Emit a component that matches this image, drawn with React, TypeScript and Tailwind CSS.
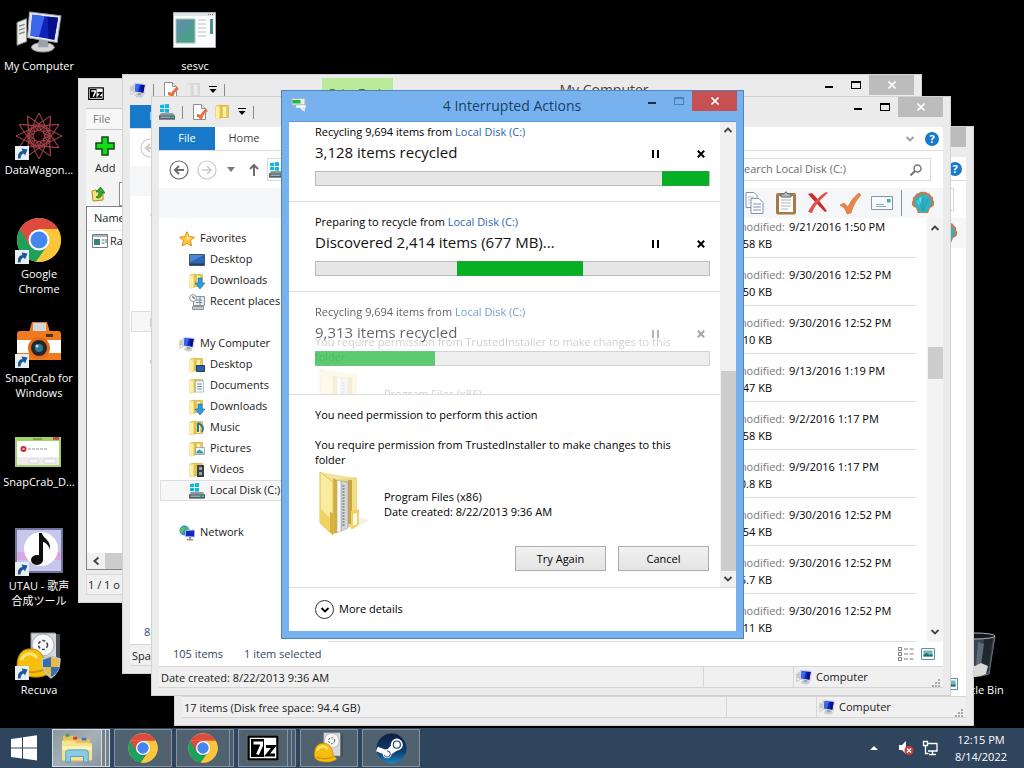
import type { ReactNode } from "react";

/* ---------- icons ---------- */

function ComputerIcon({ className }: { className: string }) {
  return (
    <svg viewBox="0 0 48 44" className={className} aria-hidden="true">
      <path d="M1 12l10-4v24l-10 4z" fill="#ecece8" stroke="#8d8d88" />
      <path d="M3 16l6-2M3 20l6-2M3 24l6-2" stroke="#888" strokeWidth="1.500" />
      <ellipse cx="28" cy="38" rx="12" ry="5" fill="#d5d7d9" stroke="#8f9294" />
      <path d="M24 29h9l1 9H23z" fill="#9ea2a6" />
      <path d="M14 1l33 4-4 28-31-5z" fill="#e2e6ea" stroke="#9ba1a8" />
      <path d="M17 4l27 3-4 23-25-4z" fill="#1224b8" />
      <path d="M17 4l13 1.500-6 21.500-9-1z" fill="#3b67ee" />
      <path d="M33 6l11 1-4 23-6-1z" fill="#07108a" />
    </svg>
  );
}

function DriveIcon({ className }: { className: string }) {
  return (
    <svg viewBox="0 0 16 16" className={className} aria-hidden="true">
      <path d="M1 1l4-.6V4H1zM5.800.3L10 0v4H5.800zM1 5h4v3.300L1 8zM5.800 5H10v3.800L5.800 8.400z" fill="#12b6e6" />
      <path d="M2 9h12l2 3v3.500H0V12z" fill="#8e989e" />
      <path d="M0 11.500h16v4H0z" fill="#4f6069" />
      <path d="M1.500 12.500h10v1.500h-10z" fill="#9ba9b1" />
      <path d="M12.500 12.500h2.500v1.500h-2.500z" fill="#25d8a0" />
    </svg>
  );
}

function PageCheckIcon({ className }: { className: string }) {
  return (
    <svg viewBox="0 0 16 16" className={className} aria-hidden="true">
      <path d="M1.500.5h8l4 4v11h-12z" fill="#fff" stroke="#8c8f92" />
      <path d="M9.500.5v4h4" fill="#e8ebee" stroke="#8c8f92" />
      <path d="M5 11.500q3 0 4 2.500 1-5 6-8" fill="none" stroke="#e4754a" strokeWidth="3" />
    </svg>
  );
}

type Overlay = "none" | "down" | "screen" | "doc" | "note" | "picture" | "film";

function FolderIcon({ className, overlay = "none" }: { className: string; overlay?: Overlay }) {
  return (
    <svg viewBox="0 0 16 16" className={className} aria-hidden="true">
      <path d="M1 2l5-1v13l-5 1z" fill="#f5df7d" stroke="#c9a63b" strokeWidth=".6" />
      <path d="M6 1.500h7.500v12H6z" fill="#ecca58" stroke="#c9a63b" strokeWidth=".6" />
      <path d="M8 3h3v10H8z" fill="#fff1a9" />
      <path d="M1 2l3 2v11.500L1 14.500z" fill="#fff0a0" />
      {overlay === "down" && <path d="M9 5h4v5h3l-5 6-5-6h3z" fill="#2c9bdc" stroke="#1470ad" strokeWidth=".6" />}
      {overlay === "screen" && <path d="M7.500 8.500h8v6h-8z" fill="#2b62ae" stroke="#243a5c" />}
      {overlay === "doc" && (
        <>
          <path d="M6.500 3h8v11h-8z" fill="#fff" stroke="#9fb0c4" strokeWidth=".8" />
          <path d="M8 6h5M8 8.500h5M8 11h5" stroke="#5f86c0" />
        </>
      )}
      {overlay === "note" && <path d="M9 3v9M9 3c5 2 6 5 4 9" fill="none" stroke="#27739a" strokeWidth="2" />}
      {overlay === "picture" && (
        <>
          <path d="M6.500 6.500h9v7h-9z" fill="#e9f4fb" stroke="#8fa3b3" strokeWidth=".8" />
          <path d="M7.500 12.500v-2l3-2 4 3v1z" fill="#3e9aa0" />
        </>
      )}
      {overlay === "film" && (
        <>
          <path d="M8 3h7v12H8z" fill="#3b3f45" />
          <path d="M10 5h3v3h-3zM10 10h3v3h-3z" fill="#8fa7b8" />
        </>
      )}
    </svg>
  );
}

function StarIcon({ className }: { className: string }) {
  return (
    <svg viewBox="0 0 16 16" className={className} aria-hidden="true">
      <path d="M8 .8l2.200 4.800 5.200.6-3.900 3.500 1.100 5.200L8 12.300l-4.600 2.600 1.100-5.200L.6 6.200l5.200-.6z" fill="#ffc83c" stroke="#e08a1c" />
      <path d="M8 3l1.200 3.500L13 7 8 9z" fill="#fff0a6" />
    </svg>
  );
}

function DesktopIcon({ className }: { className: string }) {
  return (
    <svg viewBox="0 0 16 16" className={className} aria-hidden="true">
      <path d="M.5 2.500h15v11H.5z" fill="#2e65b6" stroke="#47566b" />
      <path d="M1 3h14L1 10z" fill="#4d86d4" />
      <path d="M1 11.500h14V13H1z" fill="#203d6b" />
    </svg>
  );
}

function RecentIcon({ className }: { className: string }) {
  return (
    <svg viewBox="0 0 16 16" className={className} aria-hidden="true">
      <path d="M4.500 2.500h11v9h-11z" fill="#e7ebef" stroke="#8b949c" />
      <path d="M3.500 12.500h11v3h-11z" fill="#c4c9ce" stroke="#8b949c" />
      <path d="M7 6h6M7 8.500h6M11 3v8" stroke="#7f8b95" />
      <circle cx="4" cy="4" r="3.400" fill="#fff" stroke="#8b949c" />
      <path d="M4 2v2h2" fill="none" stroke="#555" />
    </svg>
  );
}

function NetworkIcon({ className }: { className: string }) {
  return (
    <svg viewBox="0 0 16 16" className={className} aria-hidden="true">
      <circle cx="5.500" cy="5.500" r="5" fill="#2f8fc8" />
      <path d="M2 3c2-2 5-1 4 1S3 6 4 9C1 8 0 5 2 3zM7 1c3 1 4 4 3 6-2 0-3-3-3-6z" fill="#5cc36d" />
      <path d="M6.500 5.500l9-.5v7l-9-.5z" fill="#1427c0" stroke="#aeb9c8" />
      <path d="M10 12h2v2h2v1.500H8V14h2z" fill="#8d97a4" />
    </svg>
  );
}

function ChromeIcon({ className }: { className: string }) {
  return (
    <svg viewBox="0 0 48 48" className={className} aria-hidden="true">
      <circle cx="24" cy="24" r="22" fill="#fbc63a" />
      <path d="M5 13a22 22 0 0 0 16 32.800L33 29l-9-5z" fill="#1da05b" />
      <path d="M24 13h19a22 22 0 0 1-22 32.800L33 29z" fill="#fbc63a" />
      <path d="M5 13A22 22 0 0 1 43 13H24z" fill="#dd4b3e" />
      <path d="M5 13l9.500 16.500L24 13z" fill="#dd4b3e" />
      <circle cx="24" cy="24" r="10.500" fill="#fff" />
      <circle cx="24" cy="24" r="8.500" fill="#4586ee" />
    </svg>
  );
}

function WebIcon({ className }: { className: string }) {
  const angles = [0, 30, 60, 90, 120, 150, 180, 210, 240, 270, 300, 330];
  return (
    <svg viewBox="0 0 48 48" className={className} aria-hidden="true">
      {angles.map((a) => (
        <g key={a} transform={"rotate(" + a + " 24 24)"} fill="none" stroke="#a8404a">
          <path d="M24 1l6.500 13L24 19l-6.500-5z" strokeWidth=".8" />
          <path d="M24 1l11 23M24 1L13 24" strokeWidth=".6" />
          <circle cx="24" cy="15" r="3.500" strokeWidth=".8" />
        </g>
      ))}
      <circle cx="24" cy="24" r="4" fill="#160203" />
    </svg>
  );
}

function CameraIcon({ className }: { className: string }) {
  return (
    <svg viewBox="0 0 48 48" className={className} aria-hidden="true">
      <path d="M14 12l3-10h15l3 10z" fill="#f07a1f" />
      <path d="M18 3h13v9H18z" fill="#cfd8de" />
      <path d="M2 14q0-3 3-3h38q3 0 3 3v26H2z" fill="#f07a1f" />
      <path d="M2 20h44v13H2z" fill="#fff" />
      <path d="M31 14h7v3h-7z" fill="#43331f" />
      <circle cx="24" cy="28" r="11" fill="#e86a17" />
      <circle cx="24" cy="28" r="8" fill="#20282e" />
      <circle cx="24" cy="28" r="4" fill="#2d7a94" />
      <circle cx="22" cy="26" r="1.500" fill="#b7e8f2" />
    </svg>
  );
}

function DialogShotIcon({ className }: { className: string }) {
  return (
    <svg viewBox="0 0 48 48" className={className} aria-hidden="true">
      <path d="M0 13h46v30H0z" fill="#a5d16a" />
      <path d="M2 17h42v24H2z" fill="#fff" />
      <path d="M38 13h6v3h-6z" fill="#c94f4f" />
      <path d="M18 15h9" stroke="#577637" />
      <path d="M2 33h42v8H2z" fill="#ececec" />
      <path d="M14 35h9v4h-9zM29 35h12v4H29z" fill="#f8f8f8" stroke="#cfcfcf" strokeWidth=".7" />
      <circle cx="8.500" cy="25" r="3" fill="#c62f3a" />
      <path d="M13 25h20" stroke="#999" strokeDasharray="3 1" />
      <path d="M7.500 24l2 2m0-2l-2 2" stroke="#fff" strokeWidth=".7" />
    </svg>
  );
}

function MusicNoteIcon({ className }: { className: string }) {
  return (
    <svg viewBox="0 0 48 48" className={className} aria-hidden="true">
      <path d="M1 1h46v43H1z" fill="#c9c6ee" stroke="#73759a" strokeWidth="2" />
      <path d="M2 24h44v8H2z" fill="#d9a6dd" />
      <circle cx="26" cy="21" r="17" fill="#fff" />
      <ellipse cx="22" cy="32" rx="6" ry="5" fill="#0d0d0d" />
      <path d="M24 5h3c1 6 9 6 8 17-1-5-5-8-7-8v18h-4z" fill="#0d0d0d" />
    </svg>
  );
}

function RecuvaIcon({ className, shield = false }: { className: string; shield?: boolean }) {
  return (
    <svg viewBox="0 0 48 48" className={className} aria-hidden="true">
      <path d="M16 1h24l3 3v32H16z" fill="#d6d9dc" stroke="#888" />
      <path d="M41 2h4v35h-4z" fill="#4a4e52" />
      <circle cx="28" cy="13" r="11" fill="#f6f7f8" stroke="#a8acb0" />
      <circle cx="28" cy="13" r="4.500" fill="none" stroke="#444" strokeWidth="1.500" strokeDasharray="3 2" />
      <path d="M2 34c0-13 7-18 14-17 9 0 14 7 14 18l6 5q-7 6-18 5Q1 44 2 34z" fill="#f6bf0f" stroke="#b98200" />
      <path d="M6 28c4-8 12-8 16-2" fill="none" stroke="#ffe875" strokeWidth="3" />
      <path d="M5 38c9 3 18 3 26-1" fill="none" stroke="#d29500" strokeWidth="2" />
      {shield && (
        <>
          <path d="M27 27l9-3 9 3c0 10-3 15-9 19-6-4-9-9-9-19z" fill="#e9ba3c" stroke="#b9c7d4" strokeWidth="1.500" />
          <path d="M28 28l8-3v10h-8zM36 35h8c-1 5-4 8-8 10z" fill="#356eb5" />
        </>
      )}
    </svg>
  );
}

function BinIcon({ className }: { className: string }) {
  return (
    <svg viewBox="0 0 48 48" className={className} aria-hidden="true">
      <path d="M4 4h40l-6 38q-14 5-28 0z" fill="#3b4550" stroke="#69727b" />
      <path d="M33 6h9l-5 34-8 3z" fill="#20262d" />
      <path d="M27 10l6 2-3 20-5 2z" fill="#5d6b79" />
      <ellipse cx="24" cy="4" rx="20" ry="3" fill="#14181c" stroke="#aeb6bd" />
      <path d="M9 33l7-4 8 5 6-3 7 3-2 8q-12 6-25 1z" fill="#d7d8d8" />
    </svg>
  );
}

function SesvcIcon({ className }: { className: string }) {
  return (
    <svg viewBox="0 0 48 48" className={className} aria-hidden="true">
      <path d="M2.500 4.500h42v35h-42z" fill="#fbfcfc" stroke="#a9b0b3" />
      <path d="M3 5h41v3H3z" fill="#dfe4e6" />
      <path d="M5 11h19v24H5z" fill="#4c9f8d" stroke="#a7c8c0" />
      <path d="M6 12h17L6 32z" fill="#5a93a3" />
      <path d="M27 12h8M27 16h8M27 20h8M27 24h8M27 28h8" stroke="#b9c0c4" />
      <path d="M39 11h3v15h-3z" fill="#4c8f90" />
      <path d="M37 6.500h6" stroke="#667" strokeDasharray="1 1" />
    </svg>
  );
}

function FilesFolderIcon({ className }: { className: string }) {
  return (
    <svg viewBox="0 0 64 64" className={className} aria-hidden="true">
      <path d="M38 44l17 4-14 8z" fill="#000" opacity=".06" />
      <path d="M5 0l37 6v12H10z" fill="#f3e49a" />
      <path d="M24 7l18-2v42l-4 8H24z" fill="#efd980" />
      <path d="M33 8h4v44h-4z" fill="#c9a548" />
      <path d="M37 8l5-2v32h-5z" fill="#f2dd84" />
      <path d="M26 9l7 1v46l-7 3z" fill="#d4d6da" stroke="#9c9a90" strokeWidth=".6" />
      <path d="M28.500 13v42" stroke="#8d959e" strokeWidth="2" strokeDasharray="2 1" />
      <path d="M22 8l4 1v50l-4 2z" fill="#fafafa" stroke="#a8a48c" strokeWidth=".6" />
      <path d="M18 6l4 2v53l-5 1z" fill="#d3ac45" />
      <path d="M5 0l13 10v53L5 51z" fill="#faeb9f" stroke="#dcc25c" />
      <path d="M5 36l12 12v15L5 51z" fill="#f0d260" />
      <path d="M15 40l3 1v21l-3-2z" fill="#d9b03a" />
      <path d="M36 39l8-2v15l-6 5h-2z" fill="#f0d263" />
      <path d="M38 42l4-1v11l-4 2z" fill="#fffbe8" />
    </svg>
  );
}

function ExplorerIcon({ className }: { className: string }) {
  return (
    <svg viewBox="0 0 36 32" className={className} aria-hidden="true">
      <path d="M3 3h12l2 3h15v24H3z" fill="#e5c162" />
      <path d="M6 1h4v3H6z" fill="#4a9b4a" />
      <path d="M14 4h4v3h-4z" fill="#d23b2e" />
      <path d="M23 5h5v3h-5z" fill="#3d79bd" />
      <path d="M2 8h13l3 3h16v18H2z" fill="#f7e28c" />
      <path d="M2 14h32v4H2z" fill="#fff2b8" />
      <path d="M6 31V21q0-3 3-3h18q3 0 3 3v10h-5v-6H11v6z" fill="#8acbe8" stroke="#4a9dc4" />
    </svg>
  );
}

function SteamIcon({ className }: { className: string }) {
  return (
    <svg viewBox="0 0 32 32" className={className} aria-hidden="true">
      <defs>
        <linearGradient id="steam" x1="0" y1="0" x2="0" y2="1">
          <stop offset="0" stopColor="#101d42" />
          <stop offset=".6" stopColor="#0f3d70" />
          <stop offset="1" stopColor="#1a86bc" />
        </linearGradient>
      </defs>
      <circle cx="16" cy="16" r="15.500" fill="url(#steam)" />
      <path d="M1 16.500l10 4" fill="none" stroke="#fff" strokeWidth="5" />
      <path d="M11 25l11-7-5-7-8 9z" fill="#fff" />
      <circle cx="21.500" cy="12" r="6.200" fill="#fff" />
      <circle cx="21.500" cy="12" r="4.200" fill="#17335d" />
      <circle cx="21.500" cy="12" r="3.100" fill="#fff" />
      <circle cx="11.500" cy="21.500" r="4.600" fill="#fff" />
      <path d="M8.500 22.500a3.200 3.200 0 1 0 3-4" fill="none" stroke="#17416f" />
    </svg>
  );
}

function SevenZipIcon({ className }: { className: string }) {
  return (
    <svg viewBox="0 0 32 26" className={className} aria-hidden="true">
      <path d="M0 0h32v26H0z" fill="#fff" />
      <path d="M1.500 1.500h29v23h-29z" fill="#fff" stroke="#000" strokeWidth="2.500" />
      <path d="M4 4h13v18H4z" fill="#000" />
      <path d="M6.500 8h8v2.500l-4 9" fill="none" stroke="#fff" strokeWidth="3" />
      <path d="M19 11.500h8L20 20h8" fill="none" stroke="#000" strokeWidth="2.800" />
    </svg>
  );
}

function ShellIcon({ className }: { className: string }) {
  return (
    <svg viewBox="0 0 24 24" className={className} aria-hidden="true">
      <path d="M12 1q3-1 4 1 3 0 4 3 3 1 2 4 2 2 1 5-1 2-4 3l-2 5H7l-2-5q-3-1-4-3-1-3 1-5-1-3 2-4 1-3 4-3 1-2 4-1z" fill="#bf7d53" />
      <path d="M12 3.500c6 0 8.500 5 8.500 8.500 0 3-2 5-4 6v3h-9v-3c-2-1-4-3-4-6 0-3.500 2.500-8.500 8.500-8.500z" fill="#2fb4c6" />
      <path d="M6 12q1-5 5-6l-2 8z" fill="#6ddbe4" />
      <path d="M12 20L7 8M12 20V6M12 20l5-12" stroke="#1f95aa" strokeWidth=".7" />
    </svg>
  );
}

function ViewLargeIcon({ className }: { className: string }) {
  return (
    <svg viewBox="0 0 16 16" className={className} aria-hidden="true">
      <path d="M1.500 2.500h13v11h-13z" fill="#fff" stroke="#5b93a8" />
      <path d="M3.500 4.500h9v6h-9z" fill="#6db7c8" />
      <path d="M3.500 10.500V9l3-2 3 2 3-1v2.500z" fill="#2a6b5a" />
    </svg>
  );
}

function ViewListIcon({ className }: { className: string }) {
  return (
    <svg viewBox="0 0 16 14" className={className} aria-hidden="true">
      <path d="M.5.5h3v3h-3zM.5 5.500h3v3h-3zM.5 10.500h3v3h-3z" fill="#fff" stroke="#7a7a7a" />
      <path d="M6 2h4M11.500 2h4M6 7h4M11.500 7h4M6 12h4M11.500 12h4" stroke="#7a7a7a" />
    </svg>
  );
}

function Caret({ className }: { className: string }) {
  return (
    <svg viewBox="0 0 8 8" className={className} aria-hidden="true">
      <path d="M0 .5h8" stroke="currentColor" />
      <path d="M.5 3h7L4 7z" fill="currentColor" />
    </svg>
  );
}

function Chevron({ up = false, className }: { up?: boolean; className: string }) {
  return (
    <svg viewBox="0 0 10 8" className={className} aria-hidden="true">
      <path d={up ? "M1.500 6L5 2.500 8.500 6" : "M1.500 2L5 5.500 8.500 2"} fill="none" stroke="currentColor" strokeWidth="1.800" />
    </svg>
  );
}

function ShortcutBadge() {
  return (
    <svg viewBox="0 0 14 14" className="absolute bottom-0 left-0 size-[14px]" aria-hidden="true">
      <path d="M0 0h14v14H0z" fill="#e6edf3" />
      <path d="M3 12.500C2.500 8 4 5.500 7.500 5L6.500 2.500l6 1-2.500 6-1-2C7 8 5.500 9.500 5.500 12.500z" fill="#1c5795" />
    </svg>
  );
}

/* ---------- desktop ---------- */

function DesktopItem({ label, icon, shortcut = false }: { label: string; icon: ReactNode; shortcut?: boolean }) {
  return (
    <button className="flex h-[104px] w-[78px] flex-col items-center pt-2 text-center leading-[15px] text-white">
      <span className="relative mb-[2px] flex size-12 items-center justify-center">
        {icon}
        {shortcut && <ShortcutBadge />}
      </span>
      <span className="whitespace-pre-line">{label}</span>
    </button>
  );
}

/* ---------- explorer window ---------- */

type NavRow = { label: string; icon: ReactNode; child?: boolean; gapAfter?: boolean };

const I = "size-4 shrink-0";

const favorites: NavRow[] = [
  { label: "Favorites", icon: <StarIcon className={I} /> },
  { label: "Desktop", icon: <DesktopIcon className={I} />, child: true },
  { label: "Downloads", icon: <FolderIcon className={I} overlay="down" />, child: true },
  { label: "Recent places", icon: <RecentIcon className={I} />, child: true, gapAfter: true },
];

const computerCollapsed: NavRow[] = [
  { label: "My Computer", icon: <ComputerIcon className={I} />, gapAfter: true },
];

const computerExpanded: NavRow[] = [
  { label: "My Computer", icon: <ComputerIcon className={I} /> },
  { label: "Desktop", icon: <FolderIcon className={I} overlay="screen" />, child: true },
  { label: "Documents", icon: <FolderIcon className={I} overlay="doc" />, child: true },
  { label: "Downloads", icon: <FolderIcon className={I} overlay="down" />, child: true },
  { label: "Music", icon: <FolderIcon className={I} overlay="note" />, child: true },
  { label: "Pictures", icon: <FolderIcon className={I} overlay="picture" />, child: true },
  { label: "Videos", icon: <FolderIcon className={I} overlay="film" />, child: true },
  { label: "Local Disk (C:)", icon: <DriveIcon className={I} />, child: true, gapAfter: true },
];

const network: NavRow[] = [{ label: "Network", icon: <NetworkIcon className={I} /> }];

const files = [
  { date: "9/21/2016 1:50 PM", size: "58 KB" },
  { date: "9/30/2016 12:52 PM", size: "50 KB" },
  { date: "9/30/2016 12:52 PM", size: "10 KB" },
  { date: "9/13/2016 1:19 PM", size: "47 KB" },
  { date: "9/2/2016 1:17 PM", size: "58 KB" },
  { date: "9/9/2016 1:17 PM", size: "10.8 KB" },
  { date: "9/30/2016 12:52 PM", size: "54 KB" },
  { date: "9/30/2016 12:52 PM", size: "15.7 KB" },
  { date: "9/30/2016 12:52 PM", size: "11 KB" },
];

function WindowButtons() {
  return (
    <div className="flex h-5 shrink-0">
      <button aria-label="Minimize" className="flex w-[27px] items-center justify-center pt-1">
        <span className="h-[2px] w-2 bg-black" />
      </button>
      <button aria-label="Maximize" className="flex w-[27px] items-center justify-center">
        <span className="h-2 w-[10px] border border-t-2 border-black" />
      </button>
      <button aria-label="Close" className="flex w-[45px] items-center justify-center bg-[#bcbcbc]">
        <svg viewBox="0 0 8 8" className="size-2" aria-hidden="true">
          <path d="M.5.5l7 7m0-7l-7 7" stroke="#fff" strokeWidth="1.600" />
        </svg>
      </button>
    </div>
  );
}

type ExplorerProps = {
  place: string;
  name: string;
  title?: string;
  contextTab?: string;
  icon: ReactNode;
  canGoBack?: boolean;
  nav: NavRow[];
  selected: string;
  counts: string[];
  details: string;
  showFiles?: boolean;
};

function Explorer(p: ExplorerProps) {
  return (
    <section
      aria-label={p.name}
      className={"absolute flex h-[600px] w-[800px] flex-col border border-[#d2d2d2] bg-[#ebebeb] px-[7px] pb-[7px] " + p.place}
    >
      <header className="flex h-[30px] shrink-0 items-start">
        <div className="flex h-full w-[192px] shrink-0 items-center gap-[7px]">
          {p.icon}
          <span className="h-[13px] w-px bg-[#8a8a8a]" />
          <button aria-label="Properties" className="pl-[2px]"><PageCheckIcon className="size-4" /></button>
          <button aria-label="New folder" className={p.title ? "opacity-40 grayscale" : ""}><FolderIcon className="size-4" /></button>
          <button aria-label="Customize toolbar"><Caret className="size-2" /></button>
          <span className="h-[13px] w-px bg-[#8a8a8a]" />
        </div>
        {p.contextTab && (
          <div className="mt-[3px] h-[27px] w-[71px] shrink-0 bg-[#b9eb9a] pt-[7px] text-center leading-4 text-[#3f5c2c]">
            {p.contextTab}
          </div>
        )}
        <h2 className="flex-1 pt-[5px] text-center text-[14px] leading-5 text-[#444]">{p.title}</h2>
        <WindowButtons />
      </header>

      <div className="flex h-6 shrink-0 items-stretch border-b border-[#dcdcdc] bg-white">
        <button className="w-14 bg-[#1979ca] text-white">File</button>
        <button className="w-[58px] text-[#444]">Home</button>
        <div className="ml-auto flex items-center gap-[10px] pr-1">
          <button aria-label="Expand ribbon" className="text-[#9a9a9a]"><Chevron className="h-2 w-[10px]" /></button>
          <button aria-label="Help" className="size-[14px] rounded-full bg-[#1979ca] text-center font-bold leading-[14px] text-white">?</button>
        </div>
      </div>

      <div className="flex h-[37px] shrink-0 items-center bg-white pl-[10px] pr-3">
        <button aria-label="Back" className={p.canGoBack ? "text-[#6d6d6d]" : "text-[#cacaca]"}>
          <svg viewBox="0 0 20 20" className="size-5" fill="none" stroke="currentColor" aria-hidden="true">
            <circle cx="10" cy="10" r="9" strokeWidth="1.200" />
            <path d="M15 10H6m4-4l-4 4 4 4" strokeWidth="2" />
          </svg>
        </button>
        <button aria-label="Forward" className="ml-2 text-[#cacaca]">
          <svg viewBox="0 0 20 20" className="size-5" fill="none" stroke="currentColor" aria-hidden="true">
            <circle cx="10" cy="10" r="9" strokeWidth="1.200" />
            <path d="M5 10h9m-4-4l4 4-4 4" strokeWidth="1.500" />
          </svg>
        </button>
        <button aria-label="Recent locations" className="ml-[10px] text-[#777]">
          <svg viewBox="0 0 8 5" className="h-[5px] w-2" aria-hidden="true"><path d="M0 0h8L4 5z" fill="currentColor" /></svg>
        </button>
        <button aria-label="Up" className="ml-3 text-[#6d6d6d]">
          <svg viewBox="0 0 14 14" className="size-[14px]" fill="none" stroke="currentColor" strokeWidth="2" aria-hidden="true">
            <path d="M7 13V2M3 6l4-4 4 4" />
          </svg>
        </button>
        <div className="ml-[6px] mr-[10px] flex h-[23px] flex-1 items-center border border-[#d9d9d9] px-px">{p.icon}</div>
        <label className="flex h-[23px] w-[200px] items-center border border-[#d9d9d9] pl-[6px] pr-2">
          <input
            aria-label={"Search " + p.name}
            placeholder={"Search " + p.name}
            className="min-w-0 flex-1 bg-transparent outline-none placeholder:text-[#6d6d6d]"
          />
          <svg viewBox="0 0 12 12" className="size-3" fill="none" stroke="#777" aria-hidden="true">
            <circle cx="7.500" cy="4.500" r="3.500" strokeWidth="1.500" />
            <path d="M5 7l-4.500 4.500" strokeWidth="2" />
          </svg>
        </label>
      </div>

      <div className="flex h-[30px] shrink-0 items-center justify-end gap-[10px] bg-[#f5f6f7] pr-2">
        <button aria-label="Copy">
          <svg viewBox="0 0 22 24" className="h-6 w-[22px]" fill="#fff" stroke="#8492a3" aria-hidden="true">
            <path d="M3 1.500h8l3 3v12H3z" />
            <path d="M5 6h6M5 9h6M5 12h3" stroke="#aebccb" />
            <path d="M8 7.500h8l4 4v11H8z" />
            <path d="M10 13h8M10 16h8M10 19h8" stroke="#6f94bb" />
          </svg>
        </button>
        <button aria-label="Paste">
          <svg viewBox="0 0 22 24" className="h-6 w-[22px]" aria-hidden="true">
            <rect x="1" y="2" width="20" height="21.500" rx="2" fill="#a67a43" />
            <path d="M4 5h14v16H4z" fill="#fdfdfb" />
            <path d="M6 9h10M6 12h10M6 15h10M6 18h7" stroke="#b3b9c0" />
            <path d="M6 3h3q2-4 4 0h3v3H6z" fill="#b6bbc0" stroke="#62676c" />
          </svg>
        </button>
        <button aria-label="Delete">
          <svg viewBox="0 0 22 24" className="h-6 w-[22px]" aria-hidden="true">
            <path d="M1 3l4-1c5 5 10 11 15 18l-2 1C12 15 6 9 1 3z" fill="#cf2a2c" />
            <path d="M21 2C14 8 8 14 5 22l-4-1C5 13 11 6 19 1z" fill="#e0504c" />
          </svg>
        </button>
        <button aria-label="Properties">
          <svg viewBox="0 0 22 24" className="h-6 w-[22px]" aria-hidden="true">
            <path d="M1 14l4-2 4 4C12 9 16 5 20 2l2 2c-5 5-8 11-10 18l-4 1C7 19 5 16 1 14z" fill="#ea854a" stroke="#cf6d38" strokeWidth=".6" />
          </svg>
        </button>
        <button aria-label="E-mail">
          <svg viewBox="0 0 22 16" className="h-4 w-[22px]" aria-hidden="true">
            <path d="M.5 1.500h21v13H.5z" fill="#f8fbfd" stroke="#8197ad" />
            <path d="M16 4h3.500v3.500H16z" fill="#36b3a5" />
            <path d="M5 9.500h8M5 11.500h10" stroke="#98a8b8" />
          </svg>
        </button>
        <span className="-ml-[2px] -mr-px h-[26px] w-px bg-[#8f8f8f]" />
        <button aria-label="Shell"><ShellIcon className="size-6" /></button>
      </div>

      <div className="flex min-h-0 flex-1 overflow-hidden bg-white">
        <nav className="w-[170px] shrink-0 pl-px pt-[10px]">
          {p.nav.map((row, i) => (
            <a
              key={i}
              href="#"
              className={
                "flex h-[21px] items-center gap-[5px] whitespace-nowrap border text-[#1a1a1a] " +
                (row.child ? "pl-7 " : "pl-[18px] ") +
                (row.gapAfter ? "mb-[21px] " : "") +
                (row.label === p.selected ? "border-[#dedede] bg-[#f7f7f7]" : "border-transparent")
              }
            >
              {row.icon}
              {row.label}
            </a>
          ))}
        </nav>
        <ul className="mr-[11px] flex-1">
          {p.showFiles &&
            files.map((f, i) => (
              <li
                key={i}
                className="grid h-12 grid-cols-[1fr_127px] content-start border-b border-[#dcdcdc] pt-2 leading-[17px] text-black first:-mt-2"
              >
                <span className="pr-1 text-right text-[#777]">Date modified:</span>
                <span>{f.date}</span>
                <span className="pr-[17px] text-right">{f.size}</span>
              </li>
            ))}
        </ul>
        {p.showFiles && (
          <div className="flex w-4 flex-col items-center bg-[#f3f3f3] py-[6px] text-[#444]">
            <Chevron up className="h-2 w-[10px]" />
            <span className="mt-[115px] h-8 w-[15px] bg-[#cdcdcd]" />
            <span className="flex-1" />
            <Chevron className="h-2 w-[10px]" />
          </div>
        )}
      </div>

      <footer className="shrink-0">
        <div className="flex h-6 items-center gap-[21px] bg-white pl-[14px] pr-[7px] text-[#33475f]">
          {p.counts.map((c) => (
            <span key={c}>{c}</span>
          ))}
          <div className="ml-auto flex items-center gap-[6px]">
            <button aria-label="Details view"><ViewListIcon className="h-[14px] w-4" /></button>
            <button aria-label="Large icons view"><ViewLargeIcon className="size-4" /></button>
          </div>
        </div>
        <div className="flex h-[22px] items-stretch border-y border-[#d6d6d6] bg-[#f0f0f0] leading-[22px] text-[#1a1a1a]">
          <span className="flex-1 pl-[2px]">{p.details}</span>
          <span className="w-[90px] border-l border-[#d6d6d6]" />
          <span className="flex w-[150px] items-center gap-1 border-l border-[#d6d6d6] pl-[2px]">
            <ComputerIcon className="size-4" />
            Computer
            <svg viewBox="0 0 8 8" className="ml-auto mr-[3px] size-2 self-end" fill="#aaa" aria-hidden="true">
              <path d="M6 0h2v2H6zM3 3h2v2H3zM6 3h2v2H6zM0 6h2v2H0zM3 6h2v2H3zM6 6h2v2H6z" />
            </svg>
          </span>
        </div>
      </footer>
    </section>
  );
}

/* ---------- archive window ---------- */

function ArchiveWindow() {
  return (
    <section
      aria-label="7-Zip"
      className="absolute left-[78px] top-[78px] flex h-[525px] w-[640px] flex-col border border-[#d2d2d2] bg-[#ebebeb] px-[7px] pb-[7px] text-[#222]"
    >
      <header className="flex h-[29px] items-center pl-[2px]"><SevenZipIcon className="h-[13px] w-4" /></header>
      <button className="h-[22px] border-y border-[#c9c9c9] bg-[#f7f7f7] pl-[7px] text-left text-[#777]">File</button>
      <div className="flex h-[52px] items-center bg-[#f4f4f4] pl-[9px]">
        <button className="flex flex-col items-center leading-4">
          <svg viewBox="0 0 20 20" className="mb-1 size-5" aria-hidden="true">
            <path d="M7 1h6v6h6v6h-6v6H7v-6H1V7h6z" fill="#12dc1c" stroke="#0c4a10" strokeWidth="1.500" />
          </svg>
          Add
        </button>
      </div>
      <div className="flex h-6 items-center gap-3 bg-[#f4f4f4] pl-[5px]">
        <button aria-label="Up one level">
          <svg viewBox="0 0 16 16" className="size-4" aria-hidden="true">
            <path d="M1 5l4-1 1 1h6v9l-10 1z" fill="#f5e27a" stroke="#a88d2c" />
            <path d="M6 12c4 0 5-2 5-5h3l-4.500-6L5 6h3c0 3-1 4-3 5z" fill="#2fac35" stroke="#186b1c" strokeWidth=".7" />
          </svg>
        </button>
        <span className="h-full flex-1 border border-[#8c8c8c] bg-white" />
      </div>
      <div className="flex flex-1 flex-col border border-[#828282] bg-white">
        <div className="flex h-6 items-center border-b border-[#e3e3e3] pl-[7px]">Name</div>
        <div className="flex h-5 items-center gap-[2px] pl-[5px]">
          <svg viewBox="0 0 16 14" className="h-[14px] w-4" aria-hidden="true">
            <path d="M.5.500h15v13H.5z" fill="#fff" stroke="#6f7f88" />
            <path d="M1 1h14v2H1z" fill="#a7b5bc" />
            <path d="M2 5h6v6H2z" fill="#39827a" />
            <path d="M9.500 6h3M9.500 9h3M14 5v4" stroke="#666" />
          </svg>
          Ra
        </div>
        <div className="mt-auto flex h-4 items-center bg-[#f0f0f0] pl-[5px]">
          <svg viewBox="0 0 8 10" className="h-[10px] w-2" aria-hidden="true">
            <path d="M6.500 1.500L2.500 5l4 3.500" fill="none" stroke="#444" strokeWidth="2" />
          </svg>
          <span className="ml-[5px] h-4 flex-1 bg-[#cdcdcd]" />
        </div>
      </div>
      <footer className="mt-1 h-[21px] border border-[#d9d9d9] bg-[#f0f0f0] pl-px leading-5">1 / 1 o</footer>
    </section>
  );
}

/* ---------- recycling dialog ---------- */

function Task(p: { action: string; status: string; left: string; width: string; children?: ReactNode; fading?: boolean }) {
  return (
    <div className={"relative shrink-0 border-b border-[#dcdcdc] pl-[26px] pr-[10px] pt-3 " + (p.fading ? "h-[103px]" : "h-[90px]")}>
      {p.children}
      <div className={p.fading ? "opacity-65" : ""}>
        <p className="leading-4 text-black">
          {p.action} <a href="#" className="text-[#2a65b5]">Local Disk (C:)</a>
        </p>
        <div className="flex h-[26px] items-center">
          <p className="flex-1 pb-[2px] text-[15px] text-[#111]">{p.status}</p>
          <button aria-label="Pause" className={"flex w-[18px] justify-center gap-[3px] " + (p.fading ? "opacity-45" : "")}>
            <span className="mt-[2px] h-2 w-[2px] bg-black" />
            <span className="mt-[2px] h-2 w-[2px] bg-black" />
          </button>
          <button aria-label="Stop" className={"ml-[33px] mr-[5px] mt-[2px] " + (p.fading ? "opacity-55" : "")}>
            <svg viewBox="0 0 8 8" className="size-2" aria-hidden="true">
              <path d="M.8.8l6.400 6.400m0-6.400L.8 7.200" stroke="#000" strokeWidth="2" />
            </svg>
          </button>
        </div>
        <div role="progressbar" aria-label={p.status} className="mt-[5px] flex h-[15px] border border-[#bcbcbc] bg-[#e6e6e6]">
          <span className={"-my-px h-[15px] border-y border-[#20a838] bg-[#06b025] " + p.left + " " + p.width} />
        </div>
      </div>
    </div>
  );
}

function PermissionMessage({ heading }: { heading?: string }) {
  return (
    <>
      <p className="h-[15px]">{heading}</p>
      <p className="mt-[15px] pr-6">
        You require permission from TrustedInstaller to make changes to this folder
      </p>
      <div className="mt-[5px] flex h-16 items-center gap-[5px]">
        <FilesFolderIcon className="size-16" />
        <p>
          Program Files (x86)
          <br />
          Date created: 8/22/2013 9:36 AM
        </p>
      </div>
    </>
  );
}

const dialogButton = "h-[25px] w-[91px] border border-[#acacac] bg-linear-to-b from-[#f0f0f0] to-[#e5e5e5] text-black";

function RecycleDialog() {
  return (
    <section
      role="dialog"
      aria-label="4 Interrupted Actions"
      className="absolute left-[281px] top-[90px] flex h-[549px] w-[463px] flex-col border border-[#4f83bd] bg-[#78b2ee] px-[7px] pb-[7px]"
    >
      <header className="relative flex h-[30px] shrink-0 items-start justify-between">
        <svg viewBox="0 0 16 16" className="ml-[2px] mt-[6px] size-4" aria-hidden="true">
          <path d="M1 1.500h13v6.500H1z" fill="#e8f3e8" stroke="#9fb6c4" />
          <path d="M1.500 3h8v3.500h-8z" fill="#1fb83a" />
          <path d="M5 8h10v3H5z" fill="#fff" stroke="#a5b5c1" strokeWidth=".6" />
          <path d="M9 11h5v3.500l-3-1z" fill="#dfe8ef" />
        </svg>
        <h2 className="flex-1 pl-[79px] pt-[5px] text-center text-[14px] leading-5 text-[#173f6b]">4 Interrupted Actions</h2>
        <div className="-mr-px flex h-5">
          <button aria-label="Minimize" className="flex w-[27px] items-center justify-center pt-1">
            <span className="h-[2px] w-2 bg-[#16314f]" />
          </button>
          <button aria-label="Maximize" disabled className="flex w-[27px] items-center justify-center">
            <span className="h-2 w-[10px] border border-t-2 border-[#4a7fbb]" />
          </button>
          <button aria-label="Close" className="flex w-[45px] items-center justify-center bg-[#c75050]">
            <svg viewBox="0 0 8 8" className="size-2" aria-hidden="true">
              <path d="M.5.5l7 7m0-7l-7 7" stroke="#fff" strokeWidth="1.600" />
            </svg>
          </button>
        </div>
      </header>

      <div className="flex min-h-0 flex-1 flex-col border-t border-[#5f97d4] bg-white">
        <div className="flex min-h-0 flex-1">
          <div className="flex min-w-0 flex-1 flex-col overflow-hidden">
            <div className="-mt-[10px]" />
            <Task action="Recycling 9,694 items from" status="3,128 items recycled" left="ml-[88%]" width="w-[12%]" />
            <Task action="Preparing to recycle from" status="Discovered 2,414 items (677 MB)..." left="ml-[36%]" width="w-[32%]" />
            <Task action="Recycling 9,694 items from" status="9,313 items recycled" left="-ml-px" width="w-[120px]" fading>
              <div aria-hidden="true" className="absolute inset-0 overflow-hidden pl-[26px] pr-[10px] pt-3 leading-[15px] text-black opacity-20">
                <PermissionMessage />
              </div>
            </Task>
            <div className="pl-[26px] pr-[10px] pt-3 leading-[15px] text-black">
              <PermissionMessage heading="You need permission to perform this action" />
              <div className="mt-[10px] flex justify-end gap-3 pr-px">
                <button className={dialogButton}>Try Again</button>
                <button className={dialogButton}>Cancel</button>
              </div>
            </div>
          </div>
          <div className="flex w-4 shrink-0 flex-col items-center bg-[#f0f0f0] text-[#444]">
            <Chevron up className="mt-1 h-2 w-[10px]" />
            <span className="mt-auto h-[200px] w-[15px] bg-[#cdcdcd]" />
            <Chevron className="my-1 h-2 w-[10px]" />
          </div>
        </div>
        <footer className="h-11 shrink-0 border-t border-[#dcdcdc] pl-[26px]">
          <button className="flex h-full items-center gap-[5px] text-black">
            <span className="flex size-[19px] items-center justify-center rounded-full border border-[#333]">
              <Chevron className="h-2 w-[10px]" />
            </span>
            More details
          </button>
        </footer>
      </div>
    </section>
  );
}

/* ---------- taskbar ---------- */

function TaskButton({ label, children, stack = 0, active = false }: { label: string; children: ReactNode; stack?: number; active?: boolean }) {
  return (
    <button aria-label={label} className="flex h-[38px] w-[58px]">
      <span
        className={
          "flex h-full flex-1 items-center justify-center border " +
          (active
            ? "border-[#d5dbe1] bg-linear-to-br from-[#8d979f] via-[#a5afb6] to-[#8b969f]"
            : "border-[#8793a0] bg-[#50626f]")
        }
      >
        {children}
      </span>
      {Array.from({ length: stack }, (_, i) => (
        <span key={i} className={"h-full w-1 border border-l-0 " + (active ? "border-[#d5dbe1] bg-[#73808d]" : "border-[#8793a0] bg-[#4a5c6f]")} />
      ))}
    </button>
  );
}

function Taskbar() {
  return (
    <footer className="relative flex h-10 shrink-0 items-center bg-[#2f455d] text-white">
      <button aria-label="Start" className="flex h-full w-[52px] items-center pl-[11px]">
        <svg viewBox="0 0 26 26" className="size-[26px]" fill="#fff" aria-hidden="true">
          <path d="M0 4l11-1.600v10H0zM12 2.200L26 .2v12.200H12zM0 13.400h11v10L0 22zM12 13.400h14v12.200l-14-2z" />
        </svg>
      </button>
      <div className="flex gap-1">
        <TaskButton label="File Explorer" stack={2} active><ExplorerIcon className="h-[30px] w-[34px]" /></TaskButton>
        <TaskButton label="Google Chrome"><ChromeIcon className="size-8" /></TaskButton>
        <TaskButton label="Google Chrome" stack={1}><ChromeIcon className="size-8" /></TaskButton>
        <TaskButton label="7-Zip" stack={2}><SevenZipIcon className="h-[26px] w-8" /></TaskButton>
        <TaskButton label="Recuva"><RecuvaIcon className="size-8" /></TaskButton>
        <TaskButton label="Steam"><SteamIcon className="size-[31px]" /></TaskButton>
      </div>
      <div className="ml-auto flex items-center">
        <button aria-label="Show hidden icons" className="mr-5">
          <svg viewBox="0 0 8 4" className="h-1 w-2" aria-hidden="true"><path d="M0 4h8L4 0z" fill="#fff" /></svg>
        </button>
        <button aria-label="Volume muted" className="mr-2">
          <svg viewBox="0 0 16 16" className="size-4" aria-hidden="true">
            <path d="M1 5h3l4-4v13l-4-4H1z" fill="#fff" />
            <circle cx="11" cy="10.500" r="4.500" fill="#d13b32" />
            <path d="M9 8.500l4 4m0-4l-4 4" stroke="#fff" strokeWidth="1.400" />
          </svg>
        </button>
        <button aria-label="Network" className="mr-[17px]">
          <svg viewBox="0 0 16 16" className="size-4" fill="none" stroke="#fff" strokeWidth="1.300" aria-hidden="true">
            <path d="M6 3.500h9v7.500H6M10.500 11v3M7 14.500h7" />
            <path d="M1.500 1.500h4v4h-4zM3.500 5.500v8h3" />
          </svg>
        </button>
        <time className="mr-[17px] text-center leading-[17px]">
          12:15 PM
          <br />
          8/14/2022
        </time>
      </div>
    </footer>
  );
}

/* ---------- page ---------- */

export default function App() {
  return (
    <div className="flex min-h-screen flex-col bg-black font-['Open_Sans','Noto_Sans_CJK_JP',sans-serif] text-[11px]">
      <main className="relative min-h-[728px] flex-1 overflow-hidden">
        <div className="flex items-start gap-[78px]">
          <div>
            <DesktopItem label="My Computer" icon={<ComputerIcon className="h-[42px] w-[46px]" />} />
            <DesktopItem label="DataWagon..." icon={<WebIcon className="size-12" />} shortcut />
            <DesktopItem label={"Google\nChrome"} icon={<ChromeIcon className="size-12" />} shortcut />
            <DesktopItem label={"SnapCrab for\nWindows"} icon={<CameraIcon className="size-12" />} shortcut />
            <DesktopItem label="SnapCrab_D..." icon={<DialogShotIcon className="size-12" />} />
            <DesktopItem label={"UTAU - 歌声\n合成ツール"} icon={<MusicNoteIcon className="size-12" />} shortcut />
            <DesktopItem label="Recuva" icon={<RecuvaIcon className="size-12" shield />} shortcut />
          </div>
          <DesktopItem label="sesvc" icon={<SesvcIcon className="size-12" />} />
        </div>
        <div className="absolute left-[936px] top-[624px]">
          <DesktopItem label="Recycle Bin" icon={<BinIcon className="size-12" />} />
        </div>

        <ArchiveWindow />
        <Explorer
          place="left-[174px] top-[126px]"
          name="Computer"
          icon={<ComputerIcon className={I} />}
          nav={[]}
          selected=""
          counts={[]}
          details="17 items (Disk free space: 94.4 GB)"
        />
        <Explorer
          place="left-[122px] top-[74px]"
          name="My Computer"
          title="My Computer"
          contextTab="Drive Tools"
          icon={<ComputerIcon className={I} />}
          nav={[...favorites, ...computerCollapsed, ...network]}
          selected="My Computer"
          counts={["8 items"]}
          details="Space free"
        />
        <Explorer
          place="left-[151px] top-[96px]"
          name="Local Disk (C:)"
          icon={<DriveIcon className={I} />}
          canGoBack
          nav={[...favorites, ...computerExpanded, ...network]}
          selected="Local Disk (C:)"
          counts={["105 items", "1 item selected"]}
          details="Date created: 8/22/2013 9:36 AM"
          showFiles
        />
        <RecycleDialog />
      </main>
      <Taskbar />
    </div>
  );
}
